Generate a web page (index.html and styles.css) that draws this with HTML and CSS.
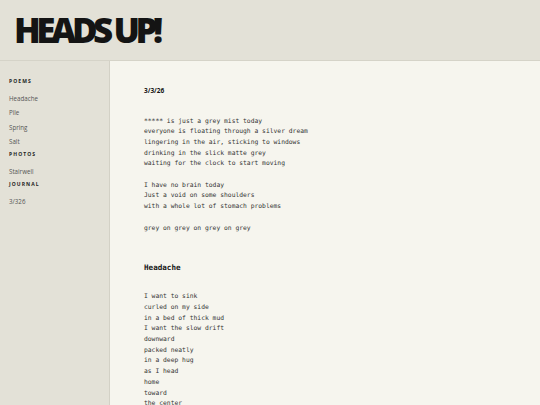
FILE: index.html
```html
<!DOCTYPE html>
<html>
<head>
<meta charset="utf-8">
<link rel="stylesheet" href="styles.css">
</head>
<body>
<header class="site-header">
  <h1 class="site-title">HEADS UP!</h1>
</header>
<div class="layout">
  <nav class="sidebar">
    <h3 class="nav-heading">POEMS</h3>
    <a class="nav-link">Headache</a>
    <a class="nav-link">Pile</a>
    <a class="nav-link">Spring</a>
    <a class="nav-link">Salt</a>
    <h3 class="nav-heading">PHOTOS</h3>
    <a class="nav-link">Stairwell</a>
    <h3 class="nav-heading">JOURNAL</h3>
    <a class="nav-link">3/326</a>
  </nav>
  <main class="content">
    <article class="entry">
      <h2 class="entry-date">3/3/26</h2>
<pre class="poem">***** is just a grey mist today
everyone is floating through a silver dream
lingering in the air, sticking to windows
drinking in the slick matte grey
waiting for the clock to start moving

I have no brain today
Just a void on some shoulders
with a whole lot of stomach problems

grey on grey on grey on grey</pre>
    </article>
    <article class="entry">
      <h2 class="entry-title">Headache</h2>
<pre class="poem">I want to sink
curled on my side
in a bed of thick mud
I want the slow drift
downward
packed neatly
in a deep hug
as I head
home
toward
the center</pre>
    </article>
  </main>
</div>
</body>
</html>
```
FILE: styles.css
```css
html, body {
  margin: 0;
  padding: 0;
  height: 100%;
  overflow: hidden;
}
body {
  background: #f6f5ee;
  font-family: "Open Sans", "Liberation Sans", sans-serif;
  color: #222;
}
.site-header {
  height: 61px;
  box-sizing: border-box;
  background: #e3e1d7;
  border-bottom: 1px solid #d5d3c8;
  padding: 12px 0 0 14px;
}
.site-title {
  margin: 0;
  font-family: "Open Sans", sans-serif;
  font-weight: 800;
  font-size: 35px;
  line-height: 35px;
  letter-spacing: -4.5px;
  color: #141414;
}
.layout {
  display: flex;
  height: calc(100% - 61px);
}
.sidebar {
  width: 110px;
  flex: none;
  box-sizing: border-box;
  background: #e3e1d7;
  border-right: 1px solid #d3d1c6;
  padding: 15px 0 0 9px;
  display: flex;
  flex-direction: column;
}
.nav-heading {
  margin: 0 0 5px;
  font-size: 5px;
  line-height: 11px;
  font-weight: 700;
  letter-spacing: 1.1px;
  color: #222;
}
.nav-link {
  font-size: 6.2px;
  line-height: 14.3px;
  color: #555;
}
.content {
  flex: 1;
  padding: 25px 0 0 34px;
}
.entry {
  margin-bottom: 30px;
}
.entry-date {
  margin: 0 0 19.5px;
  font-family: "Open Sans", sans-serif;
  font-weight: 700;
  font-size: 6.5px;
  line-height: 10px;
  color: #151515;
}
.entry-title {
  margin: 0 0 18px;
  font-family: "DejaVu Sans Mono", monospace;
  font-weight: 700;
  font-size: 7.6px;
  line-height: 10px;
  color: #151515;
}
.poem {
  margin: 0;
  font-family: "DejaVu Sans Mono", monospace;
  font-size: 6.33px;
  line-height: 10.7px;
  color: #333;
}
```
